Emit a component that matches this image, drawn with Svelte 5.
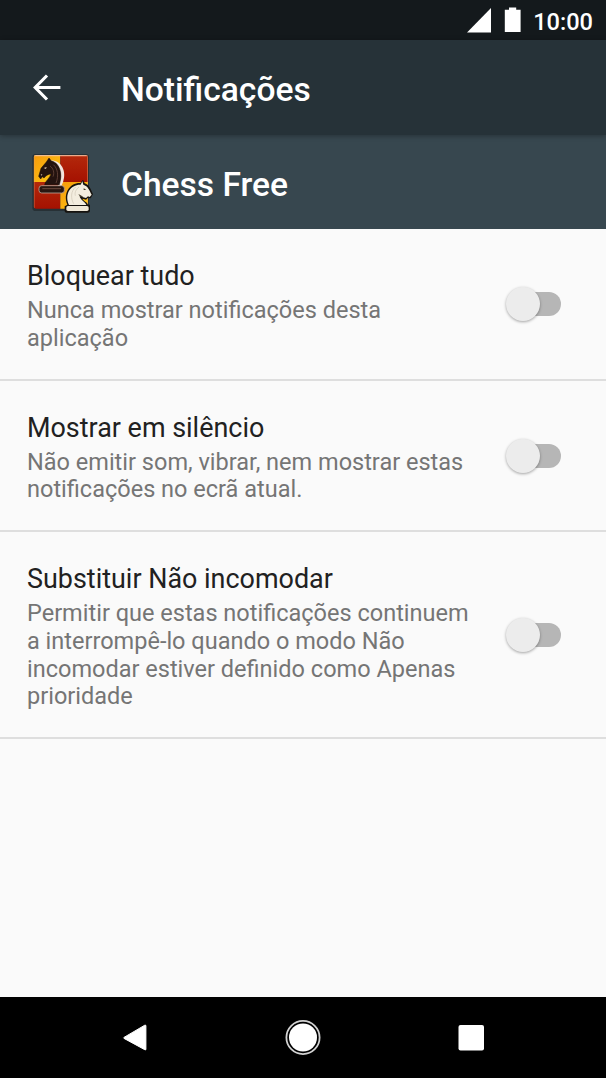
<script lang="ts">
  let settings = [
    {
      title: "Bloquear tudo",
      summary: "Nunca mostrar notificações desta aplicação",
      on: false,
    },
    {
      title: "Mostrar em silêncio",
      summary:
        "Não emitir som, vibrar, nem mostrar estas notificações no ecrã atual.",
      on: false,
    },
    {
      title: "Substituir Não incomodar",
      summary:
        "Permitir que estas notificações continuem a interrompê-lo quando o modo Não incomodar estiver definido como Apenas prioridade",
      on: false,
    },
  ];
</script>

<div class="screen">
  <div class="status">
    <svg width="60" height="40" viewBox="0 0 60 40" fill="#fff">
      <path d="M36 32.5H60V8z" />
    </svg>
    <svg class="battery" width="17" height="40" viewBox="0 0 17 40" fill="#fff">
      <path d="M5 7.4h7.2v2.3H16.6V32H.8V9.7H5z" />
    </svg>
    <span>10:00</span>
  </div>

  <header>
    <button class="back" aria-label="Voltar">
      <svg width="28" height="28" viewBox="0 0 28 28">
        <path
          d="M14 1.5L2.2 13.5L14 25.5M2.5 13.5H27.4"
          fill="none"
          stroke="#fff"
          stroke-width="3.1"
        />
      </svg>
    </button>
    <h1>Notificações</h1>
  </header>

  <div class="app">
    <svg class="logo" width="80" height="75" viewBox="0 0 240 225">
      <defs>
        <linearGradient id="gold" x1="0" y1="0" x2="1" y2="1">
          <stop offset="0" stop-color="#f79a0c" />
          <stop offset="1" stop-color="#ffcb16" />
        </linearGradient>
        <linearGradient id="red" x1="0" y1="0" x2="0" y2="1">
          <stop offset="0" stop-color="#b42a0c" />
          <stop offset="1" stop-color="#a51202" />
        </linearGradient>
        <clipPath id="board">
          <rect x="38" y="30" width="163" height="161" rx="7" />
        </clipPath>
      </defs>
      <rect x="34" y="27" width="170" height="171" rx="10" fill="#1c2327" opacity=".6" />
      <g clip-path="url(#board)">
        <rect x="38" y="29" width="80" height="82" fill="url(#gold)" />
        <rect x="118" y="29" width="85" height="82" fill="url(#red)" />
        <rect x="38" y="111" width="80" height="81" fill="url(#red)" />
        <rect x="118" y="111" width="85" height="81" fill="url(#gold)" />
        <path d="M38 31.5H202" stroke="#f4c4a4" stroke-width="4" opacity=".85" />
        <path d="M39.5 34V190M199.5 34V190" stroke="#e99b68" stroke-width="2" opacity=".7" />
      </g>
      <!-- black knight -->
      <path
        d="M88 47C118 44 139 76 126 112L120 125H109C128 95 119 56 88 50z"
        fill="#f2e6df"
      />
      <path
        d="M84 39L91 48C114 52 127 84 115 119H71C72 108 87 100 90 86C80 89 75 91 69 99L64 95L59 102L53 94L60 70L76 51z"
        fill="#24130f"
        stroke="#160b08"
        stroke-width="1.5"
      />
      <path d="M97 59C110 70 114 92 105 114M87 63C97 70 101 83 96 95" fill="none" stroke="#66453a" stroke-width="2.5" />
      <path d="M77 66l-9 3 7 3zM59 89l5-2-2 5z" fill="#dfc3ad" />
      <rect x="54" y="122" width="76" height="22" rx="8" fill="#2a1711" stroke="#b7a398" stroke-width="2.5" />
      <path d="M64 131H120" stroke="#6b4a3e" stroke-width="3" />
      <!-- white knight -->
      <path
        d="M186 104L191 115C206 119 210 135 216 148L209 160L201 158L195 164L184 161C187 167 199 172 201 179H207V197Q207 203 200 203H137Q130 203 131 195V184L139 179C125 145 146 113 178 114z"
        fill="#16130f"
      />
      <path
        d="M184 109L187 119C201 123 205 136 212 149L206 156L201 154L195 159L176 154C177 164 193 171 196 180H144C129 147 149 118 179 119z"
        fill="#f3eddf"
      />
      <path d="M164 126C149 138 149 161 158 176M174 126C163 135 161 144 163 152" fill="none" stroke="#d5cdbd" stroke-width="2.5" />
      <path d="M188 130l8 4-8 1zM172 147l15 8-9 1z" fill="#39301f" />
      <rect x="136" y="183" width="67" height="15" rx="5" fill="#eee7d7" />
    </svg>
    <h2>Chess Free</h2>
  </div>

  <main>
    {#each settings as item (item.title)}
      <div class="row">
        <div class="text">
          <div class="title">{item.title}</div>
          <div class="summary">{item.summary}</div>
        </div>
        <button
          class="switch"
          class:on={item.on}
          role="switch"
          aria-checked={item.on}
          aria-label={item.title}
          on:click={() => (item.on = !item.on)}
        >
          <span class="thumb"></span>
        </button>
      </div>
    {/each}
  </main>

  <nav>
    <svg width="606" height="81" viewBox="0 0 606 81" fill="#fff">
      <path
        d="M124 40.4L144.8 28.2Q145.9 27.7 145.9 28.9V52.2Q145.9 53.4 144.8 52.7L124 41.4Q123 40.9 124 40.4z"
        stroke="#fff"
        stroke-width="1"
      />
      <circle cx="303" cy="40.5" r="14" />
      <circle cx="303" cy="40.5" r="16.6" fill="none" stroke="#d2d2d2" stroke-width="1.8" />
      <rect x="458.5" y="28" width="25.5" height="25.5" rx="2" />
    </svg>
  </nav>
</div>

<style>
  :global(body) {
    margin: 0;
    background: #fafafa;
  }

  .screen {
    display: flex;
    flex-direction: column;
    width: 606px;
    height: 1078px;
    overflow: hidden;
    background: #fafafa;
    font-family: Roboto, sans-serif;
  }

  .status {
    display: flex;
    flex: none;
    justify-content: flex-end;
    height: 40px;
    padding-right: 13px;
    background: #14191c;
    color: #fff;
    font-size: 23.6px;
    font-weight: 500;
    line-height: 44px;
  }

  .battery {
    margin: 0 12px 0 13px;
  }

  header {
    display: flex;
    flex: none;
    align-items: center;
    position: relative;
    height: 95px;
    background: #263238;
    box-shadow: 0 1px 5px rgba(0, 0, 0, 0.3);
  }

  button {
    border: none;
    padding: 0;
    background: none;
  }

  .back {
    display: flex;
    width: 28px;
    margin: 0 60px 0 33px;
  }

  h1,
  h2 {
    margin: 0;
    padding-top: 5px;
    color: #fff;
    font-size: 33.6px;
    font-weight: 500;
    line-height: 40px;
  }

  .app {
    display: flex;
    flex: none;
    align-items: center;
    height: 94px;
    background: #37474f;
  }

  .logo {
    margin: 0 20px 0 21px;
  }

  main {
    flex: 1;
  }

  .row {
    display: flex;
    align-items: center;
    box-sizing: border-box;
    padding: 31px 45px 26px 27px;
    border-bottom: 2px solid #dedede;
  }

  .text {
    width: 450px;
    margin-right: auto;
  }

  .title {
    color: #212121;
    font-size: 26.93px;
    line-height: 32px;
  }

  .summary {
    padding-top: 5px;
    color: #757575;
    font-size: 23.53px;
    line-height: 27.75px;
  }

  .switch {
    display: flex;
    align-items: center;
    width: 50px;
    height: 24px;
    margin-bottom: 4px;
    border-radius: 12px;
    background: #b6b6b6;
  }

  .thumb {
    flex: none;
    width: 34px;
    height: 34px;
    margin-left: -5px;
    border-radius: 50%;
    background: #ececec;
    box-shadow: 0 1px 3px rgba(0, 0, 0, 0.35);
  }

  .on {
    justify-content: flex-end;
    background: #80cbc4;
  }

  .on .thumb {
    margin-right: -5px;
    background: #009688;
  }

  nav {
    flex: none;
    height: 81px;
    background: #000;
  }
</style>
